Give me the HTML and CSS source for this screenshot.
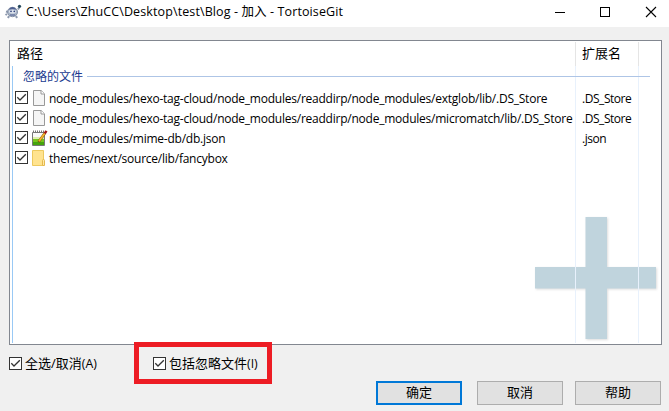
FILE: index.html
```html
<!DOCTYPE html>
<html lang="zh-CN">
<head>
<meta charset="utf-8">
<title>TortoiseGit</title>
<link rel="stylesheet" href="styles.css">
</head>
<body>
<svg class="defs" aria-hidden="true">
  <symbol id="check" viewBox="0 0 13 13"><rect x=".5" y=".5" width="12" height="12" fill="#fff" stroke="#333"/><path d="M2.3 6.3 5 9l5.8-5.8" fill="none" stroke="#333" stroke-width="1.3"/></symbol>
  <symbol id="page" viewBox="0 0 14 16"><path d="M1.500.5h7.700l3.300 3.300v11.700h-11z" fill="#f5f5f5" stroke="#999"/><path d="M9 .5V4h3.500" fill="#fff" stroke="#999"/></symbol>
</svg>
<div class="window">
  <header class="titlebar">
    <svg class="logo" width="18" height="16" viewBox="0 0 18 16">
      <path d="M14 5.500 15.500 3M3 10l-1.500 1M5 12l-1 2M12 12l1 2M2 7.500l2 .5" stroke="#8b98ad" stroke-width="2" fill="none"/>
      <ellipse cx="8.500" cy="8" rx="5" ry="4.700" fill="#a9b5c8" stroke="#8793a8"/>
      <path d="M4.500 5.500Q8.500.5 12.500 5.500z" fill="#4e5f91"/>
      <ellipse cx="8.500" cy="7.500" rx="3.500" ry="2" fill="#dfe5ee"/>
      <circle cx="7" cy="7.300" r=".9" fill="#33467e"/><circle cx="10.300" cy="7.300" r=".9" fill="#33467e"/>
      <path d="M6 11h5" stroke="#4e5f91"/><circle cx="15.500" cy="2.300" r="1.600" fill="#26495d"/>
    </svg>
    <h1 class="title">C:\Users\ZhuCC\Desktop\test\Blog - 加入 - TortoiseGit</h1>
    <svg class="controls" width="102" height="12" viewBox="0 0 102 12" fill="none" stroke="#000">
      <path d="M0 6.500h10"/><rect x="45.500" y="1.500" width="9" height="9"/><path d="m91 1 10 10M101 1 91 11" stroke-width="1.100"/>
    </svg>
  </header>
  <main class="list">
    <svg class="plus" width="124" height="126" viewBox="0 0 124 126"><path d="M51.500 1H73v50h49v21.500H73V123H51.500V72.500H1V51h50.500z"/></svg>
    <div class="edge"></div>
    <div class="row head"><span class="path">路径</span><span class="ext">扩展名</span></div>
    <div class="group"><span>忽略的文件</span><i></i></div>
    <div class="row"><span class="path"><svg class="cb"><use href="#check"/></svg><svg class="icon"><use href="#page"/></svg><span class="name">node_modules/hexo-tag-cloud/node_modules/readdirp/node_modules/extglob/lib/.DS_Store</span></span><span class="ext">.DS_Store</span></div>
    <div class="row"><span class="path"><svg class="cb"><use href="#check"/></svg><svg class="icon"><use href="#page"/></svg><span class="name">node_modules/hexo-tag-cloud/node_modules/readdirp/node_modules/micromatch/lib/.DS_Store</span></span><span class="ext">.DS_Store</span></div>
    <div class="row"><span class="path"><svg class="cb"><use href="#check"/></svg><svg class="icon wide" viewBox="0 0 17 16"><path d="M1.500 2.500h12v13h-12z" fill="#fafafa" stroke="#777"/><path d="M2 7h11v3H2z" fill="#dfeeb0"/><path d="M2 9h11v6H2z" fill="#78c51c"/><path d="M2 12h11v3H2z" fill="#45a30d"/><path d="M2 1.500h11" stroke="#777" stroke-width="2" stroke-dasharray="1 1"/><path d="m7.500 12 6.500-9" stroke="#7c5510" stroke-width="2.600"/><path d="m8 11.300 6-8.300" stroke="#f6b52c" stroke-width="1.800"/><path d="m13.700 3.500 1.800-2.600" stroke="#a01818" stroke-width="2.400"/></svg><span class="name">node_modules/mime-db/db.json</span></span><span class="ext">.json</span></div>
    <div class="row"><span class="path"><svg class="cb"><use href="#check"/></svg><svg class="icon" viewBox="0 0 14 16"><path d="M.5.5h11v15H.5z" fill="#ffe38f" stroke="#edc95e"/><path d="M10.500 10.500q0-1 1-1t1 1v5h-2z" fill="#ffe9a8" stroke="#e5b94d"/></svg><span class="name">themes/next/source/lib/fancybox</span></span><span class="ext"></span></div>
    <div class="row fill"><span class="path"></span><span class="ext"></span></div>
  </main>
  <section class="options">
    <label class="all"><svg class="cb"><use href="#check"/></svg><span>全选/取消<b>(A)</b></span></label>
    <label class="ignored"><svg class="cb"><use href="#check"/></svg><span>包括忽略文件<b>(I)</b></span></label>
  </section>
  <footer class="actions"><button class="ok">确定</button><button>取消</button><button>帮助</button></footer>
</div>
</body>
</html>
```
FILE: styles.css
```css
* { box-sizing: border-box; }
body { margin: 0; background: #f0f0f0; color: #000; font: 12px/20px "Open Sans", "Noto Sans CJK SC", sans-serif; }
.defs { position: absolute; width: 0; height: 0; }
.window { width: 669px; height: 411px; display: flex; flex-direction: column; overflow: hidden; }
.titlebar { height: 27px; background: #fff; display: flex; align-items: center; padding: 0 12px 3px 4px; flex: none; }
.logo { margin-right: 4px; }
.title { margin: 0; flex: 1; font-size: 12.5px; font-weight: 400; line-height: 20px; white-space: nowrap; letter-spacing: .11px; }
.list { position: relative; width: 653px; height: 305px; margin: 13px 0 0 9px; border: 1px solid #828790; background: #fff; display: flex; flex-direction: column; padding-bottom: 1px; flex: none; }
.plus { position: absolute; left: 524px; top: 175px; fill: #c0d4dd; filter: drop-shadow(1px 1px 1px #0002); }
.edge { position: absolute; left: 2px; top: 25px; bottom: 1px; width: 1px; background: #99c9f5; }
.row { display: flex; height: 20px; flex: none; white-space: nowrap; position: relative; }
.path { width: 566px; border-right: 1px solid #e8f1fc; display: flex; align-items: center; padding-left: 5px; letter-spacing: -.235px; }
.name { padding-top: 2px; }
.ext { width: 63px; border-right: 1px solid #e8f1fc; padding: 1px 0 0 6px; letter-spacing: -.45px; }
.head { height: 25px; font-size: 13px; line-height: 23px; padding-top: 1px; }
.head .path { padding: 0 0 1px 7px; }
.head .ext { padding-top: 0; }
.head .path, .head .ext { border-color: #e5e5e5; letter-spacing: 0; }
.group { position: relative; height: 22px; flex: none; display: flex; align-items: center; padding: 0 11px 1px 13px; color: #203a8f; background: linear-gradient(#e8f1fc, #e8f1fc) 565px 0 / 1px 100% no-repeat, linear-gradient(#e8f1fc, #e8f1fc) 628px 0 / 1px 100% no-repeat; }
.group i { flex: 1; height: 1px; background: #aec5e6; margin-left: 4px; }
.cb { width: 13px; height: 13px; flex: none; }
.path .cb { position: relative; top: -.5px; }
.icon { width: 14px; height: 16px; margin: 0 3px 0 4px; flex: none; }
.icon.wide { width: 17px; margin: 0 1px 0 3px; }
.fill { flex: 1; }
.options { position: relative; height: 36px; flex: none; font-size: 13px; }
.options b { font-weight: 400; font-size: 12.3px; }
label { display: flex; align-items: center; gap: 3px; white-space: nowrap; }
.all { position: absolute; left: 9px; top: 8px; }
.ignored { position: absolute; left: 134px; top: -3px; width: 138px; height: 42px; border: 5px solid #ed1c24; padding-left: 14px; }
.actions { display: flex; padding-left: 376px; }
button { flex: none; width: 86px; height: 24px; border: 1px solid #adadad; background: #e1e1e1; font: inherit; font-size: 13px; line-height: 18px; padding: 0 0 2px; margin: 0 12px 0 0; color: #000; }
button.ok { border: 2px solid #0078d7; margin-right: 15px; }
```
